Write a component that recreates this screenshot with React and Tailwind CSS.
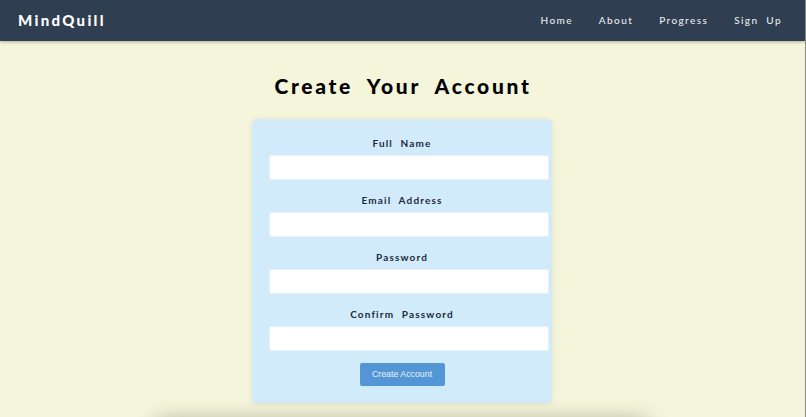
const font = "font-['Lato','Noto_Sans',sans-serif]";

const navLinks = ["Home", "About", "Progress", "Sign Up"];
const fields = ["Full Name", "Email Address", "Password", "Confirm Password"];

function Field({ label }) {
  return (
    <div className="flex flex-col items-center">
      <label className="h-[18px] text-[10px] leading-[12px] font-bold tracking-[1.15px] [word-spacing:4px] text-[#1b2a3d]">
        {label}
      </label>
      <input className="h-[25px] w-[280px] ml-[14px] shrink-0 rounded-[2px] border border-[#e6f0f8] bg-white outline-none" />
    </div>
  );
}

export default function App() {
  return (
    <div className={`h-[417px] overflow-hidden border-r border-[#8a8a80] bg-[#f5f5dc] ${font}`}>
      <header className="flex h-[41px] items-center justify-between bg-[#2f3e50] pl-[18px] pr-[23px] shadow-[0_1px_3px_rgba(0,0,0,0.3)]">
        <span className="text-[15px] font-black tracking-[2.3px] text-white">MindQuill</span>
        <nav className="flex gap-[26px]">
          {navLinks.map((link) => (
            <a key={link} className="text-[10px] font-medium tracking-[1.4px] [word-spacing:4px] text-[#e8ecef]">
              {link}
            </a>
          ))}
        </nav>
      </header>

      <main className="flex flex-col items-center pr-px">
        <h1 className="mt-[30px] h-[48px] pl-[2px] text-[21px] leading-[30px] font-black tracking-[2.7px] [word-spacing:7px] text-black">
          Create Your Account
        </h1>
        <form className="flex h-[284px] w-[300px] flex-col gap-[12px] rounded-[5px] bg-[#d2ebfb] pt-[18px] shadow-[0_1px_6px_rgba(0,0,0,0.08)]">
          <div className="flex flex-col gap-[14px]">
            {fields.map((field) => (
              <Field key={field} label={field} />
            ))}
          </div>
          <button
            type="button"
            className="mx-auto h-[23px] w-[85px] rounded-[2px] bg-[#5495d6] text-center font-['Liberation_Sans',sans-serif] text-[8.8px] text-[#e6f1fb]"
          >
            Create Account
          </button>
        </form>
        <div className="mt-[22px] h-[60px] w-[490px] shrink-0 bg-[#f5f5dc] shadow-[0_0_24px_rgba(0,0,0,0.45)]" />
      </main>
    </div>
  );
}
